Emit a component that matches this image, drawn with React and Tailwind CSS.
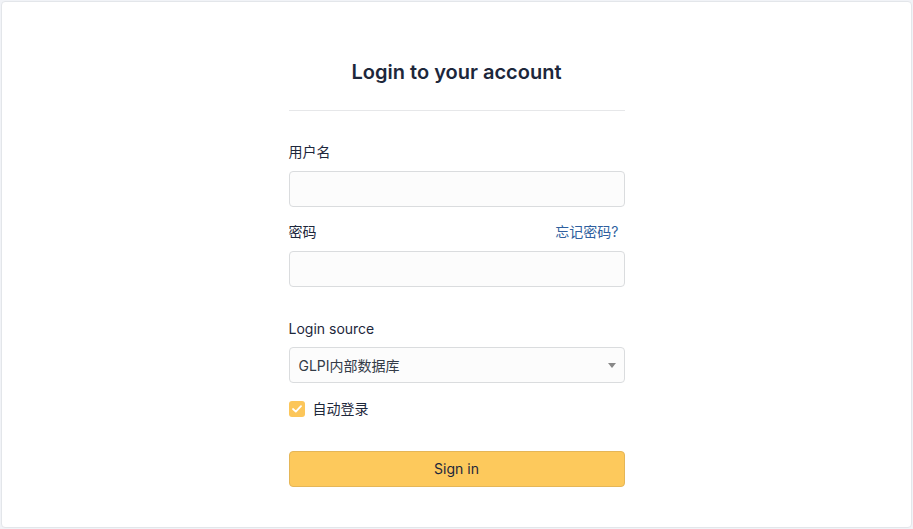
export default function App() {
  return (
    <div className="min-h-[529px] bg-[#f1f3f7] p-px" style={{ fontFamily: "Inter, 'Noto Sans CJK SC', sans-serif" }}>
      <div className="h-[527px] rounded-[4px] border border-[#e3e6ea] bg-white">
        <div className="mx-auto w-[336px] pt-[56px] text-[14px] text-[#1d273b]">
          <h2 className="text-center text-[20px] font-semibold leading-[28px] text-[#1d273b]">Login to your account</h2>
          <div className="mt-[24px] h-px bg-[#e6e7e9]" />
          <div className="mt-[31px] leading-[20px]">用户名</div>
          <div className="mt-[9px] h-[36px] rounded-[4px] border border-[#dadcde] bg-[#fcfcfc]" />
          <div className="mt-[15px] flex justify-between leading-[20px]">
            <span>密码</span>
            <span className="pr-[6px] text-[#2f5f9e]">忘记密码?</span>
          </div>
          <div className="mt-[9px] h-[36px] rounded-[4px] border border-[#dadcde] bg-[#fcfcfc]" />
          <div className="mt-[32px] leading-[20px]">Login source</div>
          <div className="mt-[8px] flex h-[36px] items-center justify-between rounded-[4px] border border-[#dadcde] bg-[#fcfcfc] pl-[9px] pr-[8px]">
            <span className="text-[#333b47]">GLPI内部数据库</span>
            <svg width="8" height="5" viewBox="0 0 8 5"><path d="M0 0 L8 0 L4 5 Z" fill="#888" /></svg>
          </div>
          <div className="mt-[16px] flex items-center gap-[8px] leading-[20px]">
            <div className="flex h-[16px] w-[16px] items-center justify-center rounded-[3px] bg-[#fcc65a]">
              <svg width="10" height="8" viewBox="0 0 10 8"><path d="M1 4 L3.8 6.6 L9 1.2" fill="none" stroke="white" strokeWidth="1.8" strokeLinecap="round" strokeLinejoin="round" /></svg>
            </div>
            <span>自动登录</span>
          </div>
          <button className="mt-[32px] flex h-[36px] w-full items-center justify-center rounded-[4px] border border-[#e5b657] bg-[#fdc95c] pb-px text-[14px] text-[#1d273b]">Sign in</button>
        </div>
      </div>
    </div>
  );
}
